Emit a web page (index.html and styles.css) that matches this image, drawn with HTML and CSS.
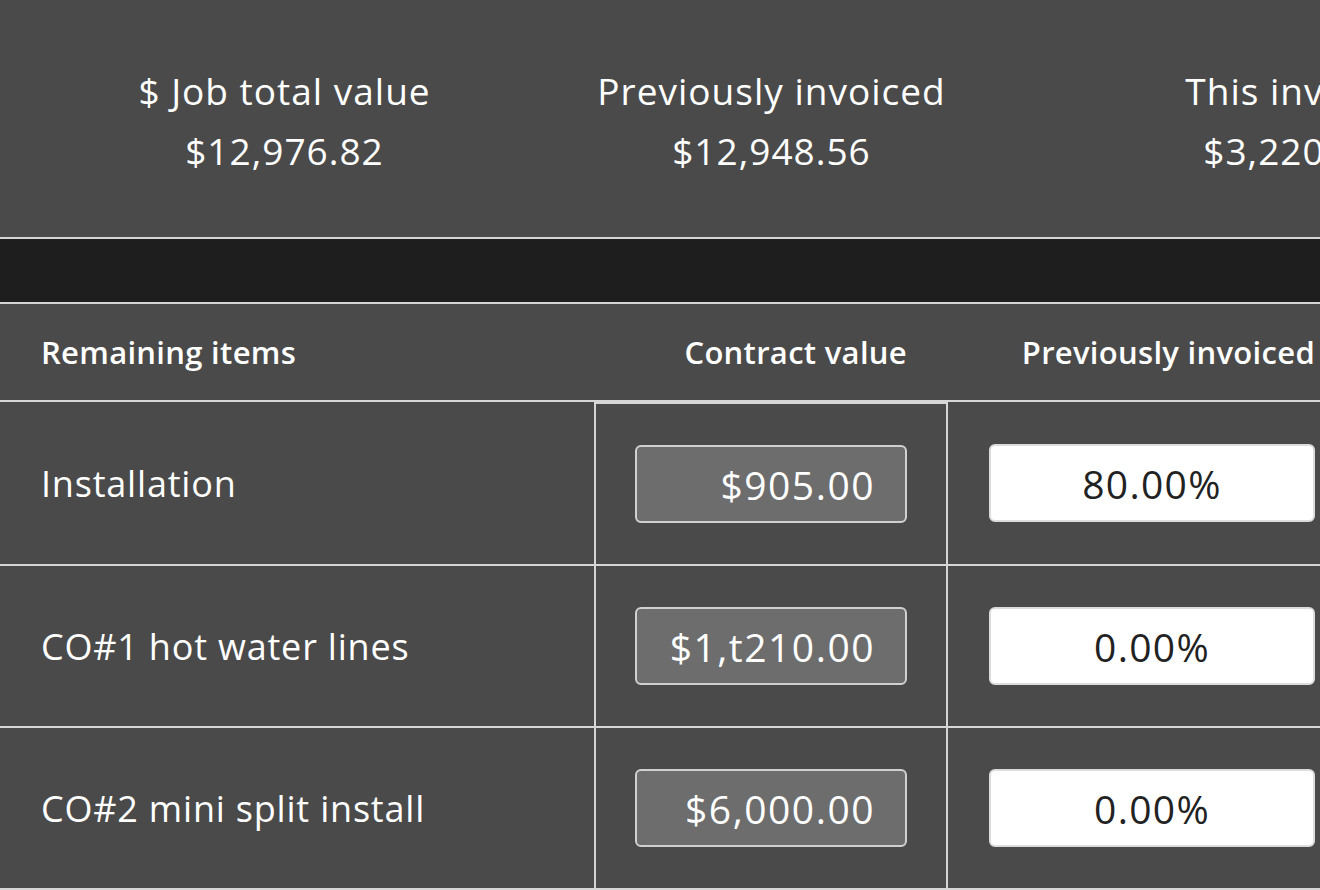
FILE: index.html
```html
<!DOCTYPE html>
<html>
<head>
<meta charset="utf-8">
<link rel="stylesheet" href="styles.css">
</head>
<body>
<div class="page">
  <section class="summary">
    <div class="stat">
      <div class="stat-label">$ Job total value</div>
      <div class="stat-value">$12,976.82</div>
    </div>
    <div class="stat">
      <div class="stat-label">Previously invoiced</div>
      <div class="stat-value">$12,948.56</div>
    </div>
    <div class="stat stat-third">
      <div class="stat-label">This invoice</div>
      <div class="stat-value">$3,220.00</div>
    </div>
  </section>
  <div class="darkbar"></div>
  <div class="table">
    <div class="thead">
      <div class="th th-name">Remaining items</div>
      <div class="th th-cv">Contract value</div>
      <div class="th th-pi">Previously invoiced</div>
    </div>
    <div class="row first">
      <div class="cell name">Installation</div>
      <div class="cell cv"><div class="money">$905.00</div></div>
      <div class="cell pi"><div class="pct">80.00%</div></div>
    </div>
    <div class="row">
      <div class="cell name">CO#1 hot water lines</div>
      <div class="cell cv"><div class="money">$1,t210.00</div></div>
      <div class="cell pi"><div class="pct">0.00%</div></div>
    </div>
    <div class="row">
      <div class="cell name">CO#2 mini split install</div>
      <div class="cell cv"><div class="money">$6,000.00</div></div>
      <div class="cell pi"><div class="pct">0.00%</div></div>
    </div>
  </div>
</div>
</body>
</html>
```

FILE: styles.css
```css
html, body {
  margin: 0;
  padding: 0;
  background: #4a4a4a;
}
body {
  width: 1320px;
  height: 890px;
  overflow: hidden;
  font-family: "Open Sans", "Noto Sans", sans-serif;
  font-variant-ligatures: none;
  color: #ffffff;
}
.page {
  width: 1400px;
}
.summary {
  height: 239px;
  box-sizing: border-box;
  padding: 61px 0 0 41px;
  display: grid;
  grid-template-columns: 487px 487px 553px;
  border-bottom: 2px solid #d6d6d6;
}
.stat {
  text-align: center;
  font-size: 37px;
  line-height: 60px;
  letter-spacing: 1px;
  white-space: nowrap;
}
.darkbar {
  height: 63px;
  background: #1e1e1e;
  border-bottom: 2px solid #d6d6d6;
}
.thead {
  display: grid;
  grid-template-columns: 594px 354px 408px;
  height: 96px;
  border-bottom: 2px solid #d6d6d6;
  align-items: center;
  font-size: 31px;
  font-weight: 600;
  letter-spacing: 0.3px;
}
.th-name {
  padding-left: 41px;
}
.th-cv {
  text-align: right;
  padding-right: 41px;
}
.th-pi {
  text-align: right;
  padding-right: 41px;
}
.row {
  display: grid;
  grid-template-columns: 594px 354px 408px;
  height: 160px;
  border-bottom: 2px solid #d6d6d6;
}
.row.first {
  height: 162px;
}
.cell {
  display: flex;
  align-items: center;
  box-sizing: border-box;
}
.name {
  padding-left: 41px;
  font-size: 36px;
  letter-spacing: 0.8px;
}
.cv {
  justify-content: center;
  border-left: 2px solid #d6d6d6;
  border-right: 2px solid #d6d6d6;
}
.row.first .cv {
  border-top: 2px solid #d6d6d6;
}
.money {
  width: 272px;
  height: 78px;
  box-sizing: border-box;
  border: 2px solid #d0d0d0;
  border-radius: 6px;
  background: #6d6d6d;
  color: #ffffff;
  font-size: 39px;
  letter-spacing: 1.5px;
  display: flex;
  align-items: center;
  justify-content: flex-end;
  padding-right: 30px;
}
.pi {
  padding-left: 41px;
}
.pct {
  width: 326px;
  height: 78px;
  box-sizing: border-box;
  border: 2px solid #dcdcdc;
  border-radius: 6px;
  background: #ffffff;
  color: #222222;
  font-size: 39px;
  letter-spacing: 1.3px;
  display: flex;
  align-items: center;
  justify-content: center;
}
```
